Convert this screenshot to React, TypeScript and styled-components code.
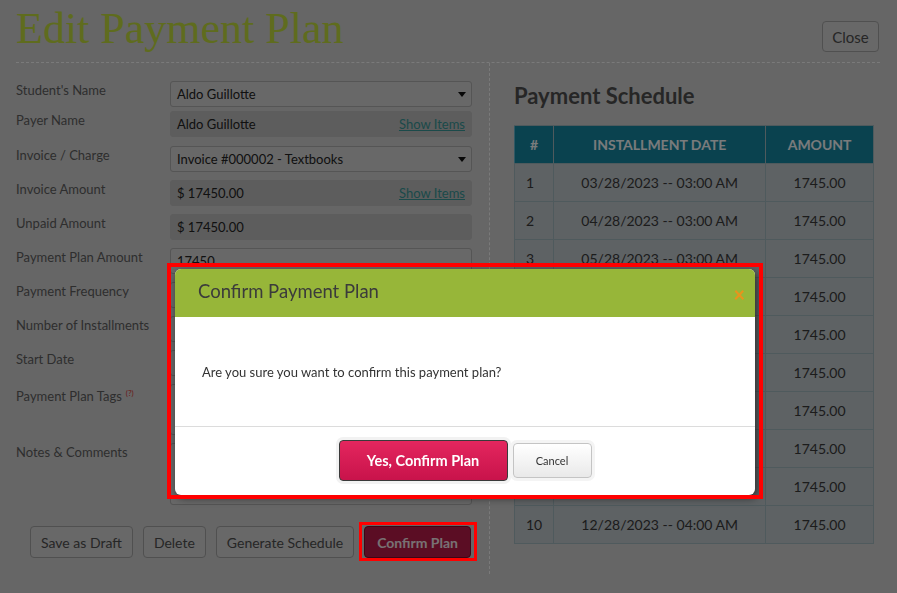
import { FC } from 'react'
import styled, { createGlobalStyle } from 'styled-components'

// page colours are the "real" ones; the backdrop halves them
const GlobalStyle = createGlobalStyle`
  html, body {
    margin: 0;
    padding: 0;
  }
  body {
    background: #cccccc;
    font-family: Lato, 'Open Sans', sans-serif;
    color: #5c5c5c;
  }
  * {
    box-sizing: border-box;
  }
`

const Page = styled.div`
  width: 897px;
  min-height: 593px;
  padding: 0 17px 0 16px;
`

const Header = styled.header`
  display: flex;
  justify-content: space-between;
  align-items: flex-start;
  height: 63px;
  border-bottom: 1px dashed #f4f4f4;
`

const Title = styled.h1`
  margin: 7px 0 0;
  font-family: 'Liberation Serif', 'DejaVu Serif', serif;
  font-weight: 400;
  font-size: 44px;
  line-height: 44px;
  color: #bed83c;
`

const Button = styled.button<{ $primary?: boolean }>`
  height: 32px;
  padding: 0 ${(p) => (p.$primary ? 12 : 10)}px;
  border: 1px solid ${(p) => (p.$primary ? '#7a0d2c' : '#a0a0a0')};
  border-radius: 4px;
  background: ${(p) => (p.$primary ? '#b61a48' : '#d0d0d0')};
  color: ${(p) => (p.$primary ? '#f0e2e7' : '#4c4c4c')};
  font-family: Lato, sans-serif;
  font-size: 14px;
  font-weight: ${(p) => (p.$primary ? 700 : 400)};
`

const CloseButton = styled(Button)`
  margin-top: 21px;
  margin-right: 1px;
  width: 57px;
  height: 31px;
  padding: 0;
  font-size: 15px;
`

const Columns = styled.div`
  display: flex;
`

const FormColumn = styled.section`
  width: 474px;
  padding: 18px 18px 16px 0;
  border-right: 1px dashed #f4f4f4;
`

const Field = styled.div<{ $top?: number }>`
  display: grid;
  grid-template-columns: 154px 302px;
  margin-top: ${(p) => (p.$top ?? 8)}px;
  &:first-child {
    margin-top: 0;
  }
`

const Label = styled.label`
  font-size: 13px;
  line-height: 18px;
  color: #5c5c5c;
`

const Hint = styled.sup`
  margin-left: 4px;
  font-size: 8px;
  color: #d43434;
`

const InputBox = styled.div<{ $readOnly?: boolean; $height?: number }>`
  position: relative;
  display: flex;
  align-items: ${(p) => (p.$height ? 'flex-start' : 'center')};
  justify-content: space-between;
  height: ${(p) => p.$height ?? 26}px;
  padding: ${(p) => (p.$height ? '5px 6px' : '0 6px')};
  border: 1px solid ${(p) => (p.$readOnly ? '#bababa' : '#aaaaaa')};
  border-radius: 3px;
  background: ${(p) => (p.$readOnly ? '#bababa' : '#d0d0d0')};
  font-size: 13px;
  color: #222;
`

const SelectBox = styled(InputBox)`
  &::after {
    content: '';
    width: 0;
    height: 0;
    margin-right: -1px;
    border-left: 4.5px solid transparent;
    border-right: 4.5px solid transparent;
    border-top: 5px solid #111;
  }
`

const ShowItems = styled.a`
  color: #369494;
  text-decoration: underline;
  font-size: 13px;
`

const ButtonRow = styled.div`
  display: flex;
  justify-content: flex-end;
  gap: 10px;
  margin-top: 21px;
`

const ScheduleColumn = styled.section`
  flex: 1;
  padding: 20px 0 0 24px;
`

const ScheduleTitle = styled.h2`
  margin: 0 0 16px;
  font-size: 22px;
  line-height: 26px;
  font-weight: 700;
  color: #4c4c4c;
`

const Table = styled.table`
  width: 360px;
  border-collapse: collapse;
  background: #bcc4c8;
  font-size: 14px;
  color: #383838;
`

const Th = styled.th<{ $w: number }>`
  width: ${(p) => p.$w}px;
  height: 38px;
  background: #15849f;
  border: 1px solid #9eb4ba;
  border-left-color: #5fb0c8;
  color: #f2f6f8;
  font-weight: 700;
  font-size: 14px;
  text-transform: uppercase;
`

const Td = styled.td<{ $left?: boolean }>`
  height: 38px;
  padding: 0 ${(p) => (p.$left ? '11px' : '0')};
  border: 1px solid #9eb4ba;
  text-align: ${(p) => (p.$left ? 'left' : 'center')};
`

const Backdrop = styled.div`
  position: fixed;
  inset: 0;
  z-index: 10;
  background: rgba(0, 0, 0, 0.5);
`

const Modal = styled.div`
  position: absolute;
  left: 175px;
  top: 269px;
  z-index: 20;
  width: 580px;
  height: 226px;
  border-radius: 6px;
  overflow: hidden;
  background: #fff;
  box-shadow: 2px 3px 8px rgba(0, 0, 0, 0.55);
`

const ModalHeader = styled.div`
  display: flex;
  align-items: center;
  justify-content: space-between;
  height: 48px;
  padding: 0 10px 0 23px;
  background: #97b639;
`

const ModalTitle = styled.h3`
  margin: -4px 0 0;
  font-size: 18.5px;
  font-weight: 400;
  color: #3b3b3b;
`

const ModalClose = styled.span`
  margin-top: 2px;
  font-size: 20px;
  line-height: 20px;
  font-weight: 900;
  color: #e8941c;
`

const ModalBody = styled.div`
  display: flex;
  align-items: center;
  height: 110px;
  padding: 0 27px;
  border-bottom: 1px solid #dcdcdc;
  font-size: 13px;
  color: #333;
`

const ModalFooter = styled.div`
  display: flex;
  align-items: center;
  justify-content: center;
  gap: 5px;
  padding-top: 13px;
`

const YesButton = styled.button`
  width: 169px;
  height: 41px;
  border: 1px solid #3a3a3a;
  border-radius: 4px;
  background: linear-gradient(#e4265e, #c8134b);
  box-shadow: 0 0 0 3px #f2f2f2;
  color: #fff;
  font-family: Lato, sans-serif;
  font-size: 14.5px;
  font-weight: 700;
`

const CancelButton = styled.button`
  width: 79px;
  height: 35px;
  border: 1px solid #c4c4c4;
  border-radius: 4px;
  background: linear-gradient(#ffffff, #e9e9e9);
  box-shadow: 0 0 0 3px #f4f4f4;
  color: #333;
  font-family: Lato, sans-serif;
  font-size: 11px;
`

const Highlight = styled.div<{ $x: number; $y: number; $w: number; $h: number; $t: number }>`
  position: absolute;
  left: ${(p) => p.$x}px;
  top: ${(p) => p.$y}px;
  width: ${(p) => p.$w}px;
  height: ${(p) => p.$h}px;
  z-index: 30;
  border: ${(p) => p.$t}px solid #ff0000;
  pointer-events: none;
`

const months = ['03', '04', '05', '06', '07', '08', '09', '10', '11', '12']
const schedule = months.map((m, i) => ({
  n: i + 1,
  date: `${m}/28/2023 -- ${i >= 8 ? '04' : '03'}:00 AM`,
  amount: '1745.00',
}))

const App: FC = () => {
  return (
    <>
      <GlobalStyle />
      <Page>
        <Header>
          <Title>Edit Payment Plan</Title>
          <CloseButton>Close</CloseButton>
        </Header>
        <Columns>
          <FormColumn>
            <Field>
              <Label>Student's Name</Label>
              <SelectBox>Aldo Guillotte</SelectBox>
            </Field>
            <Field $top={4}>
              <Label>Payer Name</Label>
              <InputBox $readOnly>
                Aldo Guillotte
                <ShowItems>Show Items</ShowItems>
              </InputBox>
            </Field>
            <Field $top={9}>
              <Label>Invoice / Charge</Label>
              <SelectBox>Invoice #000002 - Textbooks</SelectBox>
            </Field>
            <Field>
              <Label>Invoice Amount</Label>
              <InputBox $readOnly>
                $ 17450.00
                <ShowItems>Show Items</ShowItems>
              </InputBox>
            </Field>
            <Field>
              <Label>Unpaid Amount</Label>
              <InputBox $readOnly>$ 17450.00</InputBox>
            </Field>
            <Field>
              <Label>Payment Plan Amount</Label>
              <InputBox>17450</InputBox>
            </Field>
            <Field>
              <Label>Payment Frequency</Label>
              <SelectBox>Monthly</SelectBox>
            </Field>
            <Field>
              <Label>Number of Installments</Label>
              <InputBox>10</InputBox>
            </Field>
            <Field>
              <Label>Start Date</Label>
              <InputBox>03/28/2023</InputBox>
            </Field>
            <Field>
              <Label>
                Payment Plan Tags<Hint>(?)</Hint>
              </Label>
              <InputBox $height={51} />
            </Field>
            <Field>
              <Label>Notes &amp; Comments</Label>
              <InputBox $height={62} />
            </Field>
            <ButtonRow>
              <Button>Save as Draft</Button>
              <Button>Delete</Button>
              <Button>Generate Schedule</Button>
              <Button $primary>Confirm Plan</Button>
            </ButtonRow>
          </FormColumn>
          <ScheduleColumn>
            <ScheduleTitle>Payment Schedule</ScheduleTitle>
            <Table>
              <thead>
                <tr>
                  <Th $w={32}>#</Th>
                  <Th $w={218}>Installment Date</Th>
                  <Th $w={110}>Amount</Th>
                </tr>
              </thead>
              <tbody>
                {schedule.map((row) => (
                  <tr key={row.n}>
                    <Td $left>{row.n}</Td>
                    <Td>{row.date}</Td>
                    <Td>{row.amount}</Td>
                  </tr>
                ))}
              </tbody>
            </Table>
          </ScheduleColumn>
        </Columns>
      </Page>

      <Backdrop />
      <Modal>
        <ModalHeader>
          <ModalTitle>Confirm Payment Plan</ModalTitle>
          <ModalClose>×</ModalClose>
        </ModalHeader>
        <ModalBody>Are you sure you want to confirm this payment plan?</ModalBody>
        <ModalFooter>
          <YesButton>Yes, Confirm Plan</YesButton>
          <CancelButton>Cancel</CancelButton>
        </ModalFooter>
      </Modal>
      <Highlight $x={167} $y={263} $w={596} $h={236} $t={4} />
      <Highlight $x={359} $y={522} $w={118} $h={39} $t={3} />
    </>
  )
}

export default App
